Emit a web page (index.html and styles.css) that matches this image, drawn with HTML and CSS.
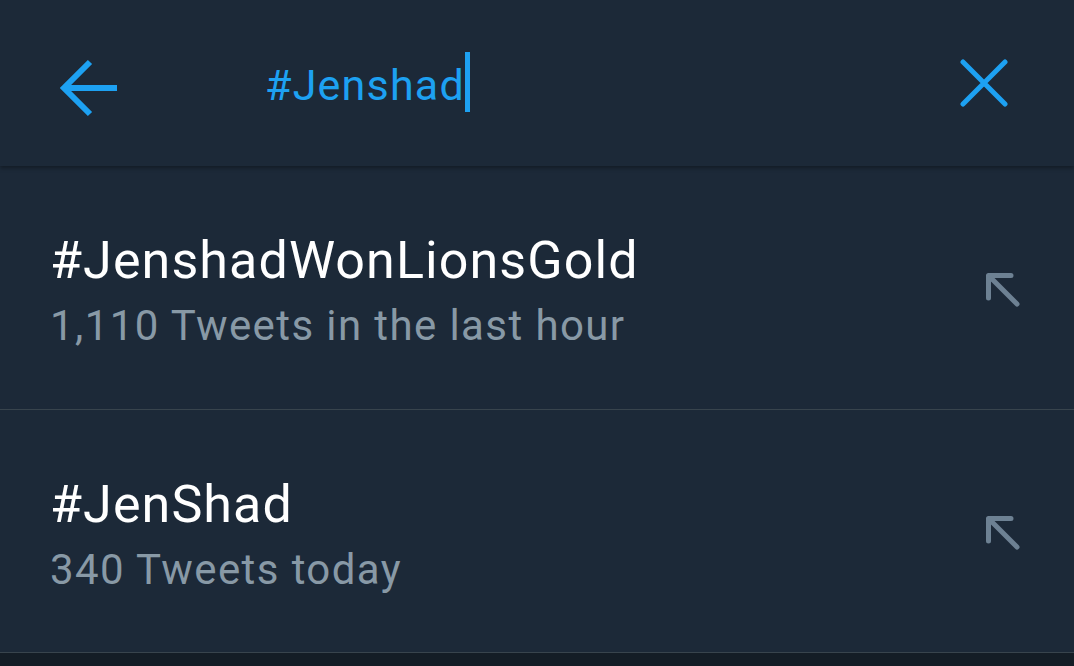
FILE: index.html
```html
<!DOCTYPE html>
<html>
<head>
<title>Search</title>
<link rel="stylesheet" href="styles.css">
</head>
<body>
<div class="app">
  <div class="search-bar">
    <button class="icon-btn back">
      <svg width="60" height="60" viewBox="0 0 60 60"><path d="M58 30H6M31 4L5 30l26 26" fill="none" stroke="#1da1f2" stroke-width="6"/></svg>
    </button>
    <div class="query"><span class="query-text">#Jenshad</span><span class="caret"></span></div>
    <button class="icon-btn clear">
      <svg width="48" height="48" viewBox="0 0 48 48"><path d="M3 3l42 42M45 3L3 45" fill="none" stroke="#1da1f2" stroke-width="5" stroke-linecap="round"/></svg>
    </button>
  </div>

  <div class="results">
    <div class="result">
      <div class="result-text">
        <p class="tag">#JenshadWonLionsGold</p>
        <p class="count">1,110 Tweets in the last hour</p>
      </div>
      <svg class="fill-arrow" width="36" height="36" viewBox="0 0 36 36"><path d="M4.5 27V4.5H27M5 5l28 28" fill="none" stroke="#6d8193" stroke-width="5" stroke-linecap="round" stroke-linejoin="round"/></svg>
    </div>
    <div class="result">
      <div class="result-text">
        <p class="tag">#JenShad</p>
        <p class="count">340 Tweets today</p>
      </div>
      <svg class="fill-arrow" width="36" height="36" viewBox="0 0 36 36"><path d="M4.5 27V4.5H27M5 5l28 28" fill="none" stroke="#6d8193" stroke-width="5" stroke-linecap="round" stroke-linejoin="round"/></svg>
    </div>
  </div>
</div>
</body>
</html>
```

FILE: styles.css
```css
body {
  margin: 0;
  padding: 0;
  background-color: #141d26;
  font-family: Roboto, "Noto Sans", sans-serif;
}

.app {
  width: 1074px;
  height: 666px;
  overflow: hidden;
  background-color: #141d26;
}

.search-bar {
  height: 166px;
  display: flex;
  align-items: center;
  background-color: #1c2938;
  box-shadow: 0 2px 4px rgba(0, 0, 0, 0.35);
  position: relative;
  z-index: 1;
}

.icon-btn {
  background: none;
  border: none;
  padding: 0;
  display: flex;
  cursor: pointer;
}

.back {
  margin-left: 59px;
  margin-top: 10px;
}

.query {
  flex: 1;
  margin-left: 146px;
  display: flex;
  align-items: flex-start;
}

.query-text {
  color: #1da1f2;
  font-size: 43px;
  letter-spacing: 1.2px;
  line-height: 60px;
  padding-top: 3px;
}

.caret {
  display: inline-block;
  width: 5px;
  height: 60px;
  background-color: #1da1f2;
  margin-left: 0;
}

.clear {
  margin-right: 66px;
  margin-top: 0;
}

.results {
  background-color: #1c2938;
}

.result {
  height: 243px;
  display: flex;
  align-items: flex-start;
  padding-left: 50px;
  padding-right: 54px;
  border-bottom: 1px solid #38444d;
}

.result:last-child {
  height: 242px;
}

.result-text {
  flex: 1;
  padding-top: 63px;
}

.tag {
  margin: 0;
  color: #ffffff;
  font-size: 52px;
  letter-spacing: 1.1px;
  line-height: 64px;
}

.count {
  margin: 0;
  color: #8899a6;
  font-size: 42px;
  letter-spacing: 1.4px;
  line-height: 66px;
}

.fill-arrow {
  align-self: center;
  margin-top: 2px;
}
```
